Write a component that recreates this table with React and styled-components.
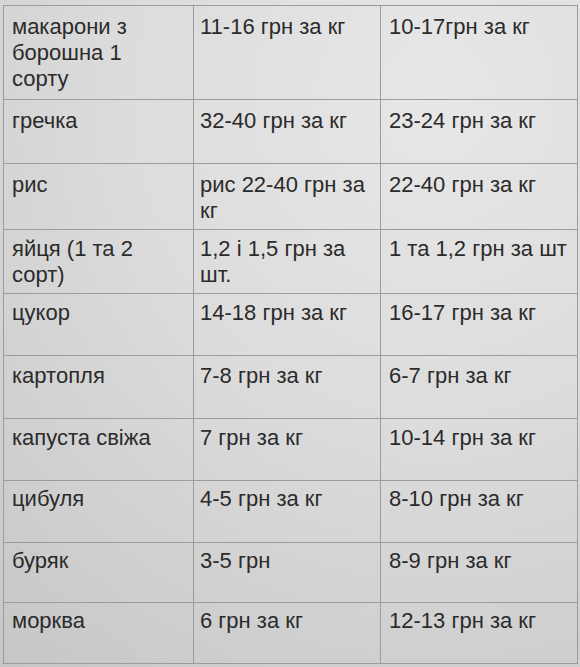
import React from "react";
import styled, { createGlobalStyle } from "styled-components";

const Global = createGlobalStyle`
  html, body { margin: 0; padding: 0; }
  body {
    width: 580px;
    height: 667px;
    overflow: hidden;
    background: radial-gradient(ellipse 120% 110% at 75% 15%, #e7e7e7 0%, #dcdcdc 45%, #c6c6c6 100%);
    font-family: "Liberation Sans", Arial, sans-serif;
  }
`;

const Page = styled.div`
  padding: 5px 0 0 3px;
`;

const Table = styled.table`
  border-collapse: collapse;
  table-layout: fixed;
  width: 574px;
  border: 1px solid #9a9a9a;
  color: #2b2b2b;
  font-size: 22px;
  line-height: 26px;
`;

const Row = styled.tr`
  height: ${(p) => p.$h}px;
`;

const Cell = styled.td`
  border: 1px solid #9c9c9c;
  vertical-align: top;
  padding: ${(p) => p.$pt}px 6px 0 ${(p) => p.$pl}px;
  white-space: nowrap;
  overflow: hidden;
`;

const widths = [190, 187, 197];
const padLeft = [8, 6, 8];

const rows = [
  { h: 94, pt: 8, cells: [["макарони з", "борошна 1", "сорту"], ["11-16 грн за кг"], ["10-17грн за кг"]] },
  { h: 64, pt: 8, cells: [["гречка"], ["32-40 грн за кг"], ["23-24 грн за кг"]] },
  { h: 66, pt: 8, cells: [["рис"], ["рис 22-40 грн за", "кг"], ["22-40 грн за кг"]] },
  { h: 64, pt: 6, cells: [["яйця (1 та 2", "сорт)"], ["1,2 і 1,5 грн за", "шт."], ["1 та 1,2 грн за шт"]] },
  { h: 62, pt: 6, cells: [["цукор"], ["14-18 грн за кг"], ["16-17 грн за кг"]] },
  { h: 63, pt: 7, cells: [["картопля"], ["7-8 грн за кг"], ["6-7 грн за кг"]] },
  { h: 62, pt: 6, cells: [["капуста свіжа"], ["7 грн за кг"], ["10-14 грн за кг"]] },
  { h: 62, pt: 5, cells: [["цибуля"], ["4-5 грн за кг"], ["8-10 грн за кг"]] },
  { h: 60, pt: 5, cells: [["буряк"], ["3-5 грн"], ["8-9 грн за кг"]] },
  { h: 61, pt: 5, cells: [["морква"], ["6 грн за кг"], ["12-13 грн за кг"]] },
];

export default function App() {
  return (
    <>
      <Global />
      <Page>
        <Table>
          <colgroup>
            {widths.map((w, i) => (
              <col key={i} style={{ width: w }} />
            ))}
          </colgroup>
          <tbody>
            {rows.map((r, ri) => (
              <Row key={ri} $h={r.h}>
                {r.cells.map((lines, ci) => (
                  <Cell key={ci} $pt={r.pt} $pl={padLeft[ci]}>
                    {lines.map((l, li) => (
                      <React.Fragment key={li}>
                        {li > 0 && <br />}
                        {l}
                      </React.Fragment>
                    ))}
                  </Cell>
                ))}
              </Row>
            ))}
          </tbody>
        </Table>
      </Page>
    </>
  );
}
